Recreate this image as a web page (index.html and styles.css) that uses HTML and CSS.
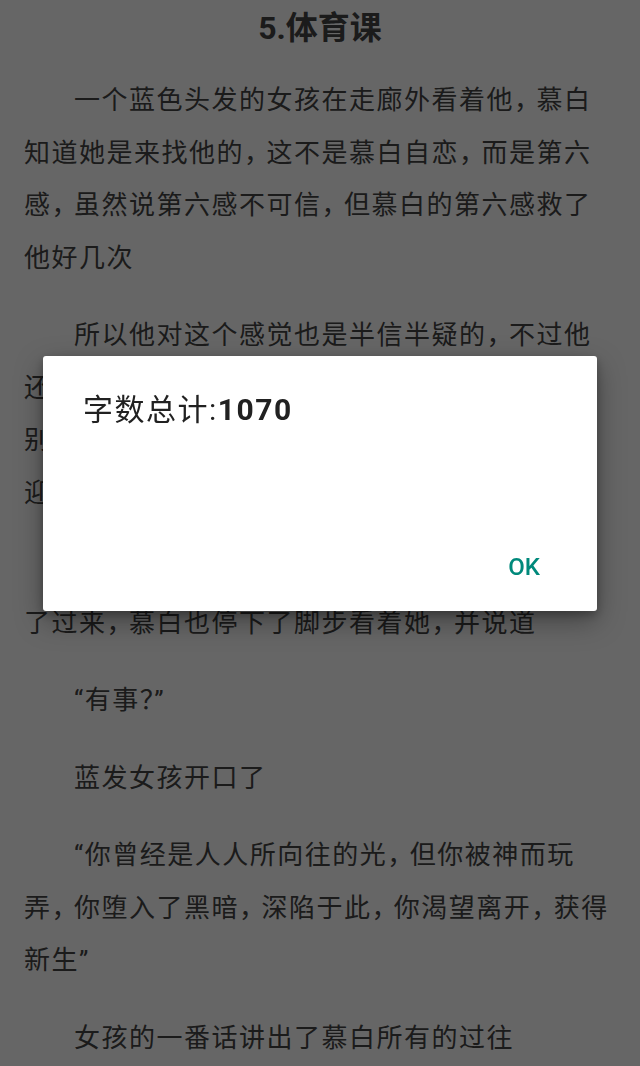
FILE: index.html
```html
<!DOCTYPE html>
<html lang="zh-CN">
<head>
    <meta charset="UTF-8">
    <title>5.体育课</title>
    <link rel="stylesheet" href="styles.css">
</head>
<body>
    <!-- chapter text -->
    <div class="chapter">
        <h1 class="chapter-title">5.体育课</h1>
        <p>一个蓝色头发的女孩在走廊外看着他， 慕白知道她是来找他的， 这不是慕白自恋， 而是第六感， 虽然说第六感不可信， 但慕白的第六感救了他好几次</p>
        <p>所以他对这个感觉也是半信半疑的， 不过他还是决定出去看看， 他也想知道她找自己做什么别的同学都在议论这个女孩， 慕白起身走出教室迎着她的目光走了过去</p>
        <p>女孩看到慕白朝自己走来， 便也加快脚步迎了过来， 慕白也停下了脚步看着她， 并说道</p>
        <p>“有事？”</p>
        <p>蓝发女孩开口了</p>
        <p>“你曾经是人人所向往的光， 但你被神而玩弄， 你堕入了黑暗， 深陷于此， 你渴望离开， 获得新生”</p>
        <p>女孩的一番话讲出了慕白所有的过往</p>
    </div>

    <!-- word count popup -->
    <div class="overlay"></div>
    <div class="dialog">
        <div class="dialog-message">字数总计:<span class="count">1070</span></div>
        <div class="dialog-actions">
            <button type="button" class="dialog-button">OK</button>
        </div>
    </div>
</body>
</html>
```

FILE: styles.css
```css
body {
    margin: 0;
    background-color: #fff;
    font-family: Roboto, "Noto Sans CJK SC", sans-serif;
    color: #444;
}
.chapter {
    padding: 0 24px;
}
.chapter-title {
    margin: 0 0 18px;
    font-size: 32px;
    line-height: 56px;
    font-weight: bold;
    text-align: center;
    color: #444;
}
.chapter p {
    margin: 0 5.5px 25px 0;
    font-size: 26px;
    line-height: 52.5px;
    letter-spacing: 1.5px;
    text-indent: 50px;
    font-feature-settings: "halt";
}
.overlay {
    position: fixed;
    top: 0;
    left: 0;
    right: 0;
    bottom: 0;
    background-color: rgba(0, 0, 0, 0.6);
}
.dialog {
    position: fixed;
    top: 356px;
    left: 43px;
    width: 554px;
    height: 255px;
    box-sizing: border-box;
    display: flex;
    flex-direction: column;
    justify-content: space-between;
    padding: 34px 0 20px 0;
    background-color: #fff;
    border-radius: 3px;
    box-shadow: 0 10px 28px rgba(0, 0, 0, 0.35), 0 4px 10px rgba(0, 0, 0, 0.25);
}
.dialog-message {
    padding: 0 40px;
    font-size: 30px;
    line-height: 40px;
    letter-spacing: 1.5px;
    color: #212121;
}
.count {
    font-weight: bold;
}
.dialog-actions {
    display: flex;
    justify-content: flex-end;
    padding-right: 32px;
}
.dialog-button {
    background: none;
    border: none;
    padding: 0 25px;
    font-family: Roboto, sans-serif;
    font-size: 24px;
    line-height: 48px;
    font-weight: 500;
    color: #00897b;
    cursor: pointer;
}
```
